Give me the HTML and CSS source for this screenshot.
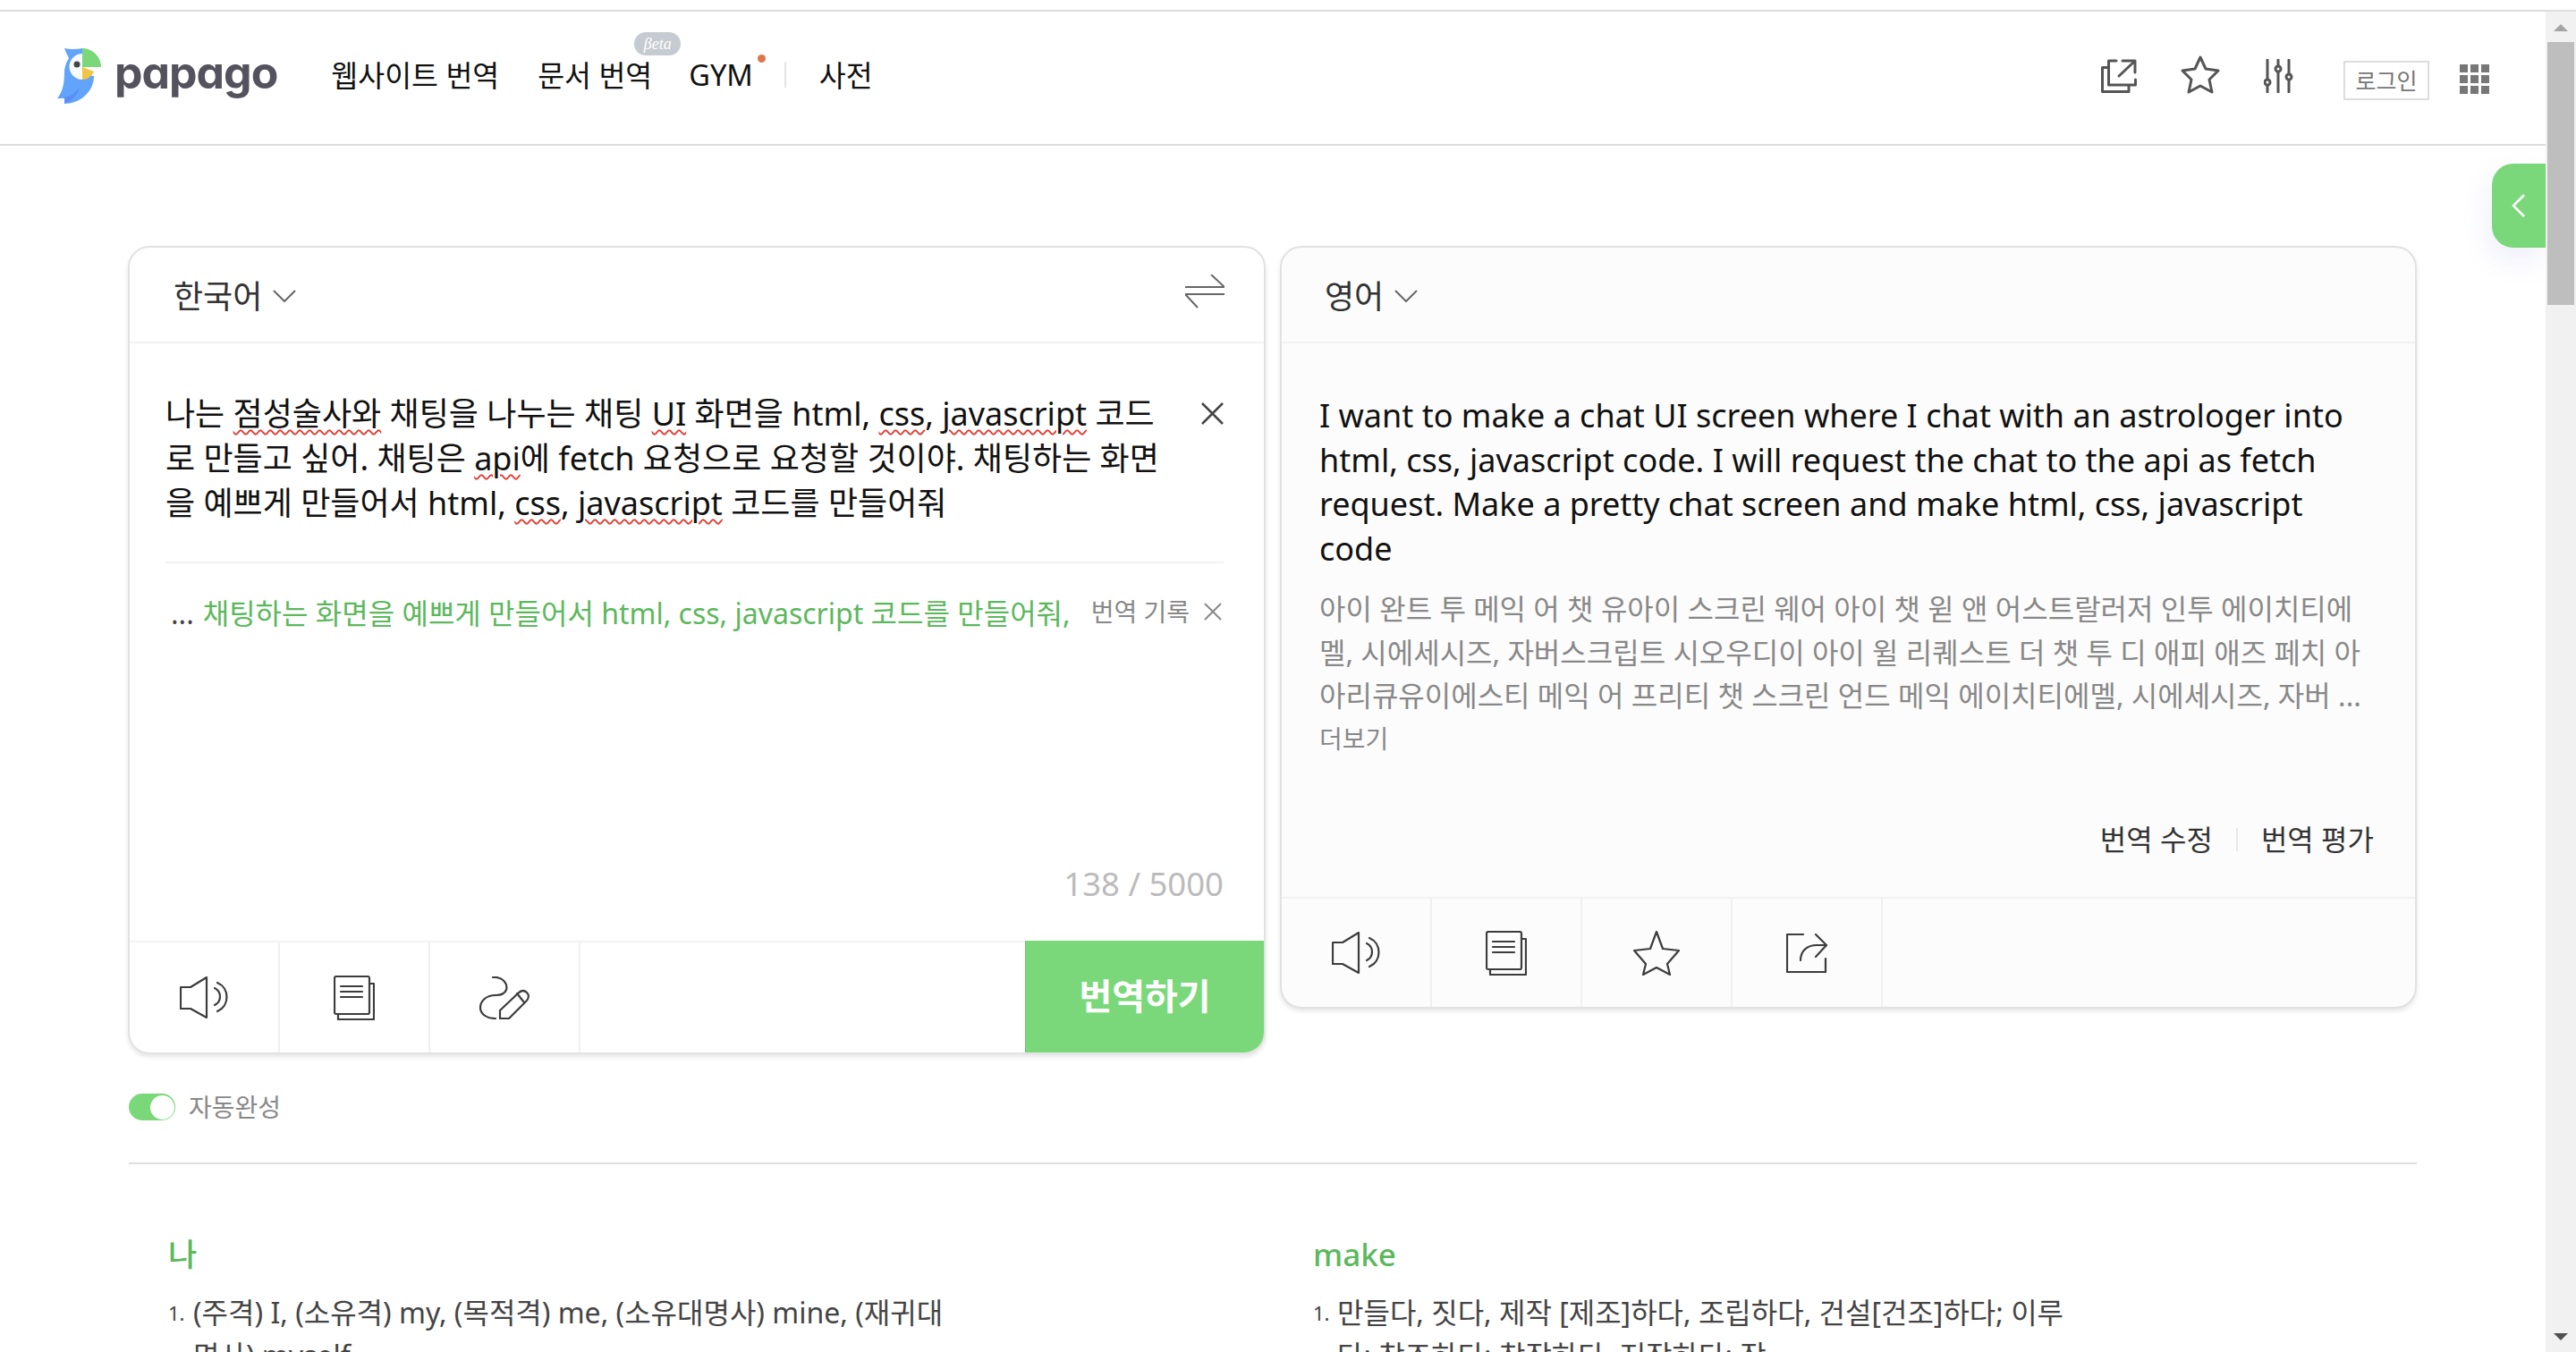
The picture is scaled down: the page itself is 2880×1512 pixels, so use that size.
FILE: index.html
```html
<!DOCTYPE html>
<html lang="ko">
<head>
    <meta charset="UTF-8">
    <title>papago</title>
    <link rel="stylesheet" href="styles.css">
</head>
<body>
    <div class="page">
        <div class="main">
            <!-- 상단 메뉴 -->
            <header class="top">
                <a class="logo">
                    <svg class="bird" width="49" height="64" viewBox="0 0 49 64">
                        <path fill="#62a3fb" d="M8 1 Q18 3 28 1 L29 30 L41 32 C41 50 25 63 8 63 V57 L0 57 C6 50 8 40 8 28 C8 20 12 14 13 12 C11 8 9 4 8 1Z"/>
                        <path fill="#5b8cf8" d="M8 63 C16 60 24 52 24 45 C20 52 14 55 8 56Z"/>
                        <path fill="#f8fbfd" d="M28 7 A14.5 14.5 0 0 0 28 36Z"/>
                        <path fill="#7ad87a" d="M28 1 C40 1 49 11 49 22 H28Z"/>
                        <path fill="#f0c542" d="M28 22 L41 27 C38 33 34 36 28 36Z"/>
                        <circle fill="#444" cx="22" cy="19" r="3.5"/>
                    </svg>
                    <span class="wordmark">papago</span>
                </a>
                <nav class="nav">
                    <a>웹사이트 번역</a>
                    <a class="has-beta">문서 번역<span class="beta">βeta</span></a>
                    <a class="has-dot">GYM<span class="dot"></span></a>
                    <i class="nav-sep"></i>
                    <a>사전</a>
                </nav>
                <div class="utils">
                    <svg class="line-icon" width="40" height="38" viewBox="0 0 40 38">
                        <path d="M17 2 H8.5 V29 H38.5 V23"/>
                        <path d="M7 9.5 H1.5 V36.5 H31 V30"/>
                        <path d="M20 19 L37 3 M24 2 H38 V15"/>
                    </svg>
                    <svg class="line-icon star-icon" width="44" height="44" viewBox="0 0 44 44">
                        <path d="M22 2 L28 15 L42 17 L32 27 L35 41 L22 34 L9 41 L12 27 L2 17 L16 15Z"/>
                    </svg>
                    <svg class="line-icon sliders" width="33" height="38" viewBox="0 0 33 38">
                        <path d="M4 1 V37 M16 1 V37 M28 1 V37"/>
                        <circle cx="4" cy="26" r="3"/>
                        <circle cx="16" cy="11" r="3"/>
                        <circle cx="28" cy="20" r="3"/>
                    </svg>
                    <a class="login">로그인</a>
                    <div class="apps">
                        <i></i><i></i><i></i><i></i><i></i><i></i><i></i><i></i><i></i>
                    </div>
                </div>
            </header>

            <button class="side-tab">
                <svg width="16" height="26" viewBox="0 0 16 26"><path d="M14 1 L2 13 L14 25"/></svg>
            </button>

            <!-- 번역 영역 -->
            <section class="workspace">
                <div class="card card-source">
                    <div class="card-head">
                        <span class="lang">한국어</span>
                        <svg class="chev" width="26" height="14" viewBox="0 0 26 14"><path d="M1 1 L13 13 L25 1"/></svg>
                        <svg class="swap" width="44" height="38" viewBox="0 0 44 38"><path d="M0 14 H44 L29 0 M44 22 H0 L14 37"/></svg>
                    </div>
                    <div class="source">
                        <div class="source-text">
                            <p>나는 <u>점성술사와</u> 채팅을 나누는 채팅 <u>UI</u> 화면을 html, <u>css</u>, <u>javascript</u> 코드<br>로 만들고 싶어. 채팅은 <u>api</u>에 fetch 요청으로 요청할 것이야. 채팅하는 화면<br>을 예쁘게 만들어서 html, <u>css</u>, <u>javascript</u> 코드를 만들어줘</p>
                            <svg class="close" width="25" height="25" viewBox="0 0 25 25"><path d="M1 1 L24 24 M24 1 L1 24"/></svg>
                        </div>
                        <div class="history">
                            <span class="dots">...</span>
                            <span class="hist-text">채팅하는 화면을 예쁘게 만들어서 html, css, javascript 코드를 만들어줘,</span>
                            <span class="hist-label">번역 기록</span>
                            <svg class="close-sm" width="20" height="20" viewBox="0 0 20 20"><path d="M1 1 L19 19 M19 1 L1 19"/></svg>
                        </div>
                        <div class="count">138 / 5000</div>
                    </div>
                    <div class="toolbar">
                        <div class="tool">
                            <svg class="tool-icon" width="54" height="48" viewBox="0 0 54 48"><path d="M1 12 H12 L30 1 V46 L12 36 H1Z"/><path d="M39 13 C47 17 47 28 39 32"/><path d="M42 7 C56 13 56 33 42 39"/></svg>
                        </div>
                        <div class="tool">
                            <svg class="tool-icon" width="46" height="50" viewBox="0 0 46 50"><rect x="1" y="1" width="39" height="42" rx="2"/><path d="M41 9 H45 V49 H5 V44"/><path d="M8 12 H32 M8 18 H32 M8 24 H32"/></svg>
                        </div>
                        <div class="tool">
                            <svg class="tool-icon" width="56" height="48" viewBox="0 0 56 48"><path d="M15 1 C26 0 32 8 30 15 C28 20 24 21 18 21 C8 21 1 27 1 35 C1 42 8 47 18 47"/><path d="M23 47 V38 L43 19 C47 15 50 15 53 18 C56 21 55 25 52 28 L33 47Z"/><path d="M42 19 L50 29"/></svg>
                        </div>
                        <button class="translate">번역하기</button>
                    </div>
                </div>

                <div class="card card-target">
                    <div class="card-head">
                        <span class="lang">영어</span>
                        <svg class="chev" width="26" height="14" viewBox="0 0 26 14"><path d="M1 1 L13 13 L25 1"/></svg>
                    </div>
                    <div class="target">
                        <p class="result">I want to make a chat UI screen where I chat with an astrologer into<br>html, css, javascript code. I will request the chat to the api as fetch<br>request. Make a pretty chat screen and make html, css, javascript<br>code</p>
                        <p class="pron">아이 완트 투 메익 어 챗 유아이 스크린 웨어 아이 챗 윋 앤 어스트랄러저 인투 에이치티에<br>멜, 시에세시즈, 자버스크립트 시오우디이 아이 윌 리퀘스트 더 챗 투 디 애피 애즈 페치 아<br>아리큐유이에스티 메익 어 프리티 챗 스크린 언드 메익 에이치티에멜, 시에세시즈, 자버 ...</p>
                        <a class="more">더보기</a>
                        <div class="actions">
                            <a>번역 수정</a>
                            <i></i>
                            <a>번역 평가</a>
                        </div>
                    </div>
                    <div class="toolbar">
                        <div class="tool">
                            <svg class="tool-icon" width="54" height="48" viewBox="0 0 54 48"><path d="M1 12 H12 L30 1 V46 L12 36 H1Z"/><path d="M39 13 C47 17 47 28 39 32"/><path d="M42 7 C56 13 56 33 42 39"/></svg>
                        </div>
                        <div class="tool">
                            <svg class="tool-icon" width="46" height="50" viewBox="0 0 46 50"><rect x="1" y="1" width="39" height="42" rx="2"/><path d="M41 9 H45 V49 H5 V44"/><path d="M8 12 H32 M8 18 H32 M8 24 H32"/></svg>
                        </div>
                        <div class="tool">
                            <svg class="tool-icon" width="52" height="50" viewBox="0 0 52 50"><path d="M26 1 L33 20 L51 22 L38 37 L41 49 L26 41 L11 49 L14 37 L1 22 L19 20Z"/></svg>
                        </div>
                        <div class="tool">
                            <svg class="tool-icon" width="46" height="44" viewBox="0 0 46 44"><path d="M19 1 H1 V43 H44 V28"/><path d="M33 1 L45 13 L33 26"/><path d="M16 30 C16 19 24 13 34 13 H45"/></svg>
                        </div>
                    </div>
                </div>
            </section>

            <div class="auto">
                <span class="switch"><i></i></span>
                <span>자동완성</span>
            </div>

            <!-- 사전 결과 -->
            <section class="dict">
                <div class="dict-col">
                    <h3>나</h3>
                    <div class="def"><span class="num">1.</span><p>(주격) I, (소유격) my, (목적격) me, (소유대명사) mine, (재귀대<br>명사) myself</p></div>
                </div>
                <div class="dict-col">
                    <h3>make</h3>
                    <div class="def"><span class="num">1.</span><p>만들다, 짓다, 제작 [제조]하다, 조립하다, 건설[건조]하다; 이루<br>다; 창조하다; 창작하다, 저작하다; 작</p></div>
                </div>
            </section>
        </div>

        <!-- 스크롤바 -->
        <aside class="scrollbar">
            <i class="arrow-up"></i>
            <div class="thumb"></div>
            <i class="arrow-down"></i>
        </aside>
    </div>
</body>
</html>
```

FILE: styles.css
```css
/* 기본 */
* {
    margin: 0;
    padding: 0;
    box-sizing: border-box;
}

html, body {
    height: 100%;
    overflow: hidden;
}

body {
    padding-top: 11px;
    background: #fff;
    color: #222;
    font-family: "Noto Sans", "Noto Sans CJK KR", sans-serif;
}

.page {
    display: flex;
    height: 100%;
    border-top: 2px solid #ddd;
}

.main {
    flex: 1;
    position: relative;
    overflow: hidden;
}

/* 헤더 */
.top {
    display: flex;
    align-items: center;
    height: 150px;
    padding: 0 63px 4px 64px;
    border-bottom: 2px solid #ddd;
}

.logo {
    display: flex;
    align-items: center;
    gap: 15px;
}

.wordmark {
    font-family: Inter, sans-serif;
    font-feature-settings: "cv11";
    font-size: 50px;
    font-weight: 700;
    line-height: 1;
    letter-spacing: -1px;
    color: #53525d;
    margin-top: -8px;
}

.nav {
    display: flex;
    align-items: center;
    margin: -4px 0 0 60px;
    font-size: 32.5px;
    color: #111;
}

.nav a {
    position: relative;
    margin-right: 43px;
}

.nav .has-beta {
    margin-right: 41px;
}

.nav .has-dot {
    margin-right: 35px;
}

.beta {
    position: absolute;
    top: -23px;
    left: 108px;
    width: 52px;
    height: 26px;
    border-radius: 13px;
    background: #c5cbd0;
    color: #fff;
    font-family: "Liberation Serif", serif;
    font-size: 18px;
    font-style: italic;
    line-height: 26px;
    text-align: center;
}

.dot {
    position: absolute;
    top: 0;
    right: -14px;
    width: 9px;
    height: 9px;
    border-radius: 50%;
    background: #e2744c;
}

.nav-sep {
    width: 2px;
    height: 29px;
    margin-right: 37px;
    background: #e4e4e4;
}

.utils {
    display: flex;
    align-items: center;
    margin-left: auto;
}

.line-icon {
    fill: none;
    stroke: #555;
    stroke-width: 3;
    stroke-linejoin: round;
    stroke-linecap: round;
    margin-right: 49px;
}

.star-icon {
    margin-top: -2px;
}

.sliders {
    margin-right: 56px;
}

.sliders circle {
    fill: #fff;
}

.login {
    display: block;
    width: 96px;
    height: 44px;
    margin: 10px 34px 0 0;
    border: 2px solid #ddd;
    color: #777;
    font-size: 25px;
    line-height: 40px;
    text-align: center;
}

.apps {
    display: grid;
    grid-template-columns: repeat(3, 9px);
    gap: 3px;
    margin-top: 6px;
}

.apps i {
    height: 9px;
    background: #777;
}

/* 오른쪽 탭 */
.side-tab {
    position: absolute;
    top: 170px;
    right: 0;
    display: flex;
    align-items: center;
    justify-content: center;
    width: 60px;
    height: 94px;
    border: none;
    border-radius: 24px 0 0 24px;
    background: #7ad87a;
    box-shadow: -4px 14px 30px rgba(120, 130, 220, 0.12);
}

.side-tab svg {
    fill: none;
    stroke: #fff;
    stroke-width: 2.5;
}

/* 번역 카드 */
.workspace {
    display: flex;
    align-items: flex-start;
    gap: 16px;
    padding: 112px 144px 0 143px;
}

.card {
    flex: 1;
    border: 2px solid #e2e2e2;
    border-radius: 24px;
    background: #fff;
    box-shadow: 0 3px 5px rgba(0, 0, 0, 0.1);
    overflow: hidden;
}

.card-source {
    flex: none;
    width: 1272px;
}

.card-target {
    background: #fcfcfc;
}

.card-head {
    display: flex;
    align-items: center;
    height: 107px;
    padding: 0 44px 0 48px;
    border-bottom: 2px solid #f2f2f2;
    font-size: 36px;
    color: #333;
}

.card-source .card-head {
    padding-left: 49px;
}

.chev {
    margin: 2px 0 0 12px;
    fill: none;
    stroke: #666;
    stroke-width: 2;
}

.swap {
    margin: -8px 0 0 auto;
    fill: none;
    stroke: #666;
    stroke-width: 2;
}

/* 원문 */
.source {
    display: flex;
    flex-direction: column;
    height: 668px;
    padding: 54px 45px 44px 40px;
}

.source-text {
    display: flex;
    justify-content: space-between;
    padding-bottom: 40px;
    border-bottom: 2px solid #f2f2f2;
    font-size: 36px;
    line-height: 50px;
    color: #111;
    white-space: nowrap;
}

.source-text u {
    text-decoration: underline wavy #e33b30 2px;
    text-underline-offset: 4px;
}

.close {
    margin-top: 12px;
    fill: none;
    stroke: #444;
    stroke-width: 2.5;
}

.history {
    display: flex;
    align-items: center;
    margin-top: 31px;
    font-size: 32px;
    line-height: 50px;
    white-space: nowrap;
}

.dots {
    margin: 0 10px 0 6px;
    color: #444;
}

.hist-text {
    color: #5cb85c;
}

.hist-label {
    margin: -4px 0 0 auto;
    color: #888;
    font-size: 28px;
}

.close-sm {
    margin: -4px 2px 0 16px;
    fill: none;
    stroke: #888;
    stroke-width: 2;
}

.count {
    margin-top: auto;
    color: #bbb;
    font-size: 36.5px;
    line-height: 40px;
    text-align: right;
}

/* 툴바 */
.toolbar {
    display: flex;
    height: 125px;
    border-top: 2px solid #f2f2f2;
}

.card-target .toolbar {
    height: 123px;
}

.tool {
    display: flex;
    align-items: center;
    justify-content: center;
    width: 168px;
    border-right: 2px solid #f0f0f0;
}

.tool-icon {
    fill: none;
    stroke: #3c3c3c;
    stroke-width: 2.2;
    stroke-linejoin: round;
    stroke-linecap: round;
}

.translate {
    width: 267px;
    margin: -2px 0 0 auto;
    padding-bottom: 6px;
    border: none;
    border-left: 1px solid #6cc36c;
    background: #7ad87a;
    color: #fff;
    font-family: "Noto Sans", "Noto Sans CJK KR", sans-serif;
    font-size: 40px;
    font-weight: 700;
}

/* 번역 결과 */
.target {
    position: relative;
    height: 619px;
    padding: 56px 44px 0 42px;
}

.result {
    font-size: 36px;
    line-height: 49.6px;
    color: #111;
    white-space: nowrap;
}

.pron {
    margin-top: 19px;
    font-size: 32px;
    line-height: 48.4px;
    color: #888;
    white-space: nowrap;
}

.more {
    display: block;
    margin-top: 3px;
    font-size: 28px;
    line-height: 40px;
    color: #888;
}

.actions {
    position: absolute;
    right: 46px;
    bottom: 42px;
    display: flex;
    align-items: center;
    gap: 26px;
    font-size: 32px;
    line-height: 44px;
    color: #333;
}

.actions i {
    width: 2px;
    height: 26px;
    background: #e8e8e8;
}

/* 자동완성 */
.auto {
    display: flex;
    align-items: center;
    gap: 15px;
    margin: 44px 0 0 144px;
    color: #888;
    font-size: 28px;
    line-height: 30px;
}

.switch {
    display: flex;
    justify-content: flex-end;
    align-items: center;
    width: 52px;
    height: 30px;
    padding-right: 1px;
    border-radius: 15px;
    background: #7ad87a;
}

.switch i {
    width: 27px;
    height: 27px;
    border-radius: 50%;
    background: #fff;
}

/* 사전 */
.dict {
    display: grid;
    grid-template-columns: 1324px 1fr;
    margin: 47px 144px 0 144px;
    padding-top: 76px;
    border-top: 2px solid #ddd;
}

.dict-col:first-child {
    padding-left: 44px;
}

.dict-col:first-child .num {
    width: 28px;
}

.dict-col h3 {
    font-size: 35px;
    font-weight: 500;
    line-height: 50px;
    color: #5cb85c;
}

.def {
    display: flex;
    margin-top: 16px;
    font-size: 32px;
    line-height: 48px;
    color: #444;
    white-space: nowrap;
}

.num {
    width: 27px;
    font-size: 22px;
}

/* 스크롤바 */
.scrollbar {
    display: flex;
    flex-direction: column;
    align-items: center;
    width: 34px;
    background: #f1f1f1;
}

.arrow-up,
.arrow-down {
    width: 0;
    height: 0;
    border-left: 8px solid transparent;
    border-right: 8px solid transparent;
}

.arrow-up {
    margin-top: 14px;
    border-bottom: 8px solid #a3a3a3;
}

.thumb {
    width: 30px;
    height: 294px;
    margin-top: 12px;
    background: #bebebe;
}

.arrow-down {
    margin: auto 0 13px;
    border-top: 8px solid #505050;
}
```
